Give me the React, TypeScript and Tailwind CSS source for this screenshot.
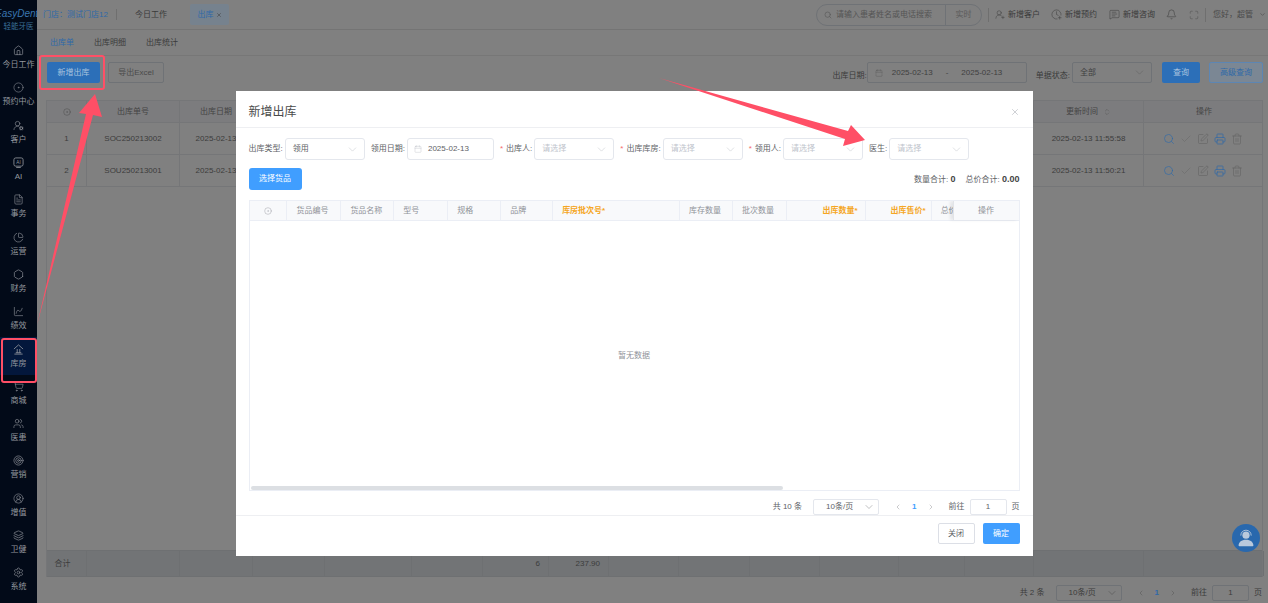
import {
  Bell, Calendar, Check, ChartPie, ChartSpline, ChevronDown, ChevronLeft, ChevronRight, ChevronsUpDown, CircleDot,
  CircleUserRound, ClockPlus, FileText, Home, Layers, Maximize, MessageSquareText, Printer, Search, Settings,
  ShoppingCart, SquarePen, Target, Trash2, UserRoundCog, UserRoundPlus, Users, X, Hexagon,
} from 'lucide-react'
import type { ReactNode } from 'react'

const sans = "font-['Liberation_Sans','Noto_Sans_CJK_SC',sans-serif]"

// 侧边栏里 lucide 没有的两个图标
function AiIcon() {
  return (
    <svg width="11" height="11" viewBox="0 0 12 12" fill="none" stroke="currentColor" strokeWidth="0.9">
      <rect x="1" y="1" width="10" height="9" rx="2" />
      <text x="6" y="7.6" textAnchor="middle" fontSize="5" fill="currentColor" stroke="none">AI</text>
      <path d="M3.5 11.5h5" />
    </svg>
  )
}

function StoreIcon() {
  return (
    <svg width="11" height="11" viewBox="0 0 12 12" fill="none" stroke="currentColor" strokeWidth="0.9">
      <path d="M1 5.5 6 1l5 4.5M4.6 5.5v4M7.4 5.5v4M1.5 11h9M3 9.5h6" />
    </svg>
  )
}

// 右下角客服头像
function AgentIcon() {
  return (
    <svg width="20" height="20" viewBox="0 0 20 20" fill="currentColor">
      <circle cx="10" cy="7.2" r="3.6" />
      <path d="M2.6 17.5c0-3.6 3-5.8 7.4-5.8s7.4 2.2 7.4 5.8c0 .5-.3.8-.8.8H3.4c-.5 0-.8-.3-.8-.8Z" />
      <path d="M4.8 7.6C4.8 4.4 7 2.2 10 2.2s5.2 2.2 5.2 5.4" fill="none" stroke="currentColor" strokeWidth="0.9" />
    </svg>
  )
}

const navItems: { label: string; icon: ReactNode; active?: boolean }[] = [
  { label: '今日工作', icon: <Home size={11} strokeWidth={1.4} /> },
  { label: '预约中心', icon: <CircleDot size={11} strokeWidth={1.2} /> },
  { label: '客户', icon: <UserRoundCog size={11} strokeWidth={1.3} /> },
  { label: 'AI', icon: <AiIcon /> },
  { label: '事务', icon: <FileText size={11} strokeWidth={1.3} /> },
  { label: '运营', icon: <ChartPie size={11} strokeWidth={1.3} /> },
  { label: '财务', icon: <Hexagon size={11} strokeWidth={1.4} /> },
  { label: '绩效', icon: <ChartSpline size={11} strokeWidth={1.3} /> },
  { label: '库房', icon: <StoreIcon />, active: true },
  { label: '商城', icon: <ShoppingCart size={11} strokeWidth={1.3} /> },
  { label: '医患', icon: <Users size={11} strokeWidth={1.3} /> },
  { label: '营销', icon: <Target size={11} strokeWidth={1.4} /> },
  { label: '增值', icon: <CircleUserRound size={11} strokeWidth={1.3} /> },
  { label: '卫健', icon: <Layers size={11} strokeWidth={1.4} /> },
  { label: '系统', icon: <Settings size={11} strokeWidth={1.3} /> },
]

const pageCols =
  'grid grid-cols-[40px_93px_73px_72px_87px_71px_66px_60px_70px_71px_70px_79px_66px_69px_110px_120px]'

const rows = [
  { no: 1, code: 'SOC250213002', updated: '2025-02-13 11:55:58' },
  { no: 2, code: 'SOU250213001', updated: '2025-02-13 11:50:21' },
]

function Sidebar() {
  return (
    <aside className="flex w-[37px] shrink-0 flex-col overflow-hidden bg-[#020a18] text-[#94989f]">
      <div className="h-[39px] shrink-0 overflow-hidden pt-[7px]">
        <div className="-ml-[5px] whitespace-nowrap text-[10px] italic leading-[13px] text-[#3a76b0]">EasyDent</div>
        <div className="mt-[2px] text-center text-[7.5px] leading-[9px] text-[#3a6f98]">轻能牙医</div>
      </div>
      {navItems.map((item) => (
        <div
          key={item.label}
          className={`flex h-[37.3px] shrink-0 flex-col items-center justify-center gap-[4px] ${item.active ? 'bg-[#03173c]' : ''}`}
        >
          {item.icon}
          <span className="whitespace-nowrap text-[8px] leading-[10px]">{item.label}</span>
        </div>
      ))}
    </aside>
  )
}

function TopBar() {
  return (
    <header className="flex h-[30px] shrink-0 items-center border-b border-[#747474] pl-[6px] pr-[2px] text-[#3a3a3a]">
      <span className="w-[65px] whitespace-nowrap text-[#2f69a8]">门店：测试门店12</span>
      <span className="ml-[8px] h-[11px] w-px bg-[#6f6f6f]" />
      <span className="ml-[18px]">今日工作</span>
      <span className="ml-[23px] flex h-[21px] w-[39px] items-center justify-center gap-[2px] rounded-[2px] bg-[#76828e] text-[#2f69a8]">
        出库 <X size={6} className="text-[#3a3a3a]" />
      </span>
      <div className="ml-auto flex h-[22px] w-[166px] items-center rounded-full border border-[#6f7276] text-[#5a5a5a]">
        <Search size={8} className="ml-[7px]" />
        <span className="ml-[4px] w-[109px] whitespace-nowrap text-[#555]">请输入患者姓名或电话搜索</span>
        <span className="flex h-full flex-1 items-center justify-center border-l border-[#6f7276]">实时</span>
      </div>
      <span className="ml-[6px] h-[14px] w-px bg-[#6f6f6f]" />
      <span className="ml-[6px] flex w-[45px] items-center gap-[3px] whitespace-nowrap">
        <UserRoundPlus size={11} strokeWidth={1.1} />新增客户
      </span>
      <span className="ml-[11px] flex w-[46px] items-center gap-[3px] whitespace-nowrap">
        <ClockPlus size={11} strokeWidth={1.1} />新增预约
      </span>
      <span className="ml-[12px] flex w-[46px] items-center gap-[3px] whitespace-nowrap">
        <MessageSquareText size={11} strokeWidth={1.1} />新增咨询
      </span>
      <Bell size={11} strokeWidth={1.2} className="ml-[11px]" />
      <Maximize size={10} strokeWidth={1.2} className="ml-[12px] text-[#4f4f4f]" />
      <span className="ml-[6px] h-[14px] w-px bg-[#6f6f6f]" />
      <span className="ml-[7px] whitespace-nowrap text-[#4a4a4a]">您好，超管</span>
      <ChevronDown size={7} className="ml-[6px] text-[#4a4a4a]" />
    </header>
  )
}

function SubTabs() {
  return (
    <nav className="flex h-[26px] shrink-0 items-center gap-[20px] border-b border-[#777] pl-[13px] text-[#3a3a3a]">
      <span className="text-[#2f69a8]">出库单</span>
      <span>出库明细</span>
      <span>出库统计</span>
    </nav>
  )
}

function Toolbar() {
  return (
    <div className="flex h-[34px] shrink-0 items-start pl-[10px] pr-[5px] pt-[6px] text-[#3a3a3a]">
      <button className="h-[21px] w-[53px] rounded-[2px] bg-[#2c6fb8] text-[#a9c4df]">新增出库</button>
      <button className="ml-[8px] h-[21px] w-[56px] rounded-[2px] border border-[#6f7276] text-[#4a4a4a]">导出Excel</button>
      <span className="ml-auto self-center whitespace-nowrap">出库日期:</span>
      <div className="flex h-[21px] w-[160px] items-center rounded-[2px] border border-[#6f7276] text-[#3f3f3f]">
        <Calendar size={8} strokeWidth={1.2} className="ml-[7px] text-[#5a5a5a]" />
        <span className="ml-[9px]">2025-02-13</span>
        <span className="ml-[13px]">-</span>
        <span className="ml-[13px]">2025-02-13</span>
      </div>
      <span className="ml-[9px] self-center whitespace-nowrap">单据状态:</span>
      <div className="ml-[2px] flex h-[21px] w-[80px] items-center justify-between rounded-[2px] border border-[#6f7276] pl-[7px] pr-[5px] text-[#3f3f3f]">
        全部 <ChevronDown size={13} strokeWidth={0.8} className="text-[#5a5a5a]" />
      </div>
      <button className="ml-[10px] h-[21px] w-[38px] rounded-[2px] bg-[#2c6fb8] text-[#a9c4df]">查询</button>
      <button className="ml-[9px] h-[21px] w-[54px] rounded-[2px] border border-[#5d86b3] bg-[#7b8794] text-[#2f69a8]">高级查询</button>
    </div>
  )
}

function OrderTable() {
  const headers = ['', '出库单号', '出库日期', '', '', '', '', '', '', '', '', '', '', '']
  return (
    <div className="ml-[9px] mr-[5px] mt-[10px] flex h-[477px] shrink-0 flex-col border-l border-r border-t border-[#757678] text-[#3c3c3c]">
      <div className={`${pageCols} h-[22px] shrink-0 border-b border-[#757678] bg-[#7c7c7e] text-[#444]`}>
        <div className="flex items-center justify-center border-r border-[#757678]">
          <CircleDot size={8} strokeWidth={1.2} />
        </div>
        {headers.slice(1).map((h, i) => (
          <div key={i} className="flex items-center justify-center border-r border-[#757678]">{h}</div>
        ))}
        <div className="flex items-center justify-center gap-[5px] border-r border-[#757678]">
          更新时间 <ChevronsUpDown size={8} strokeWidth={1.4} className="text-[#555]" />
        </div>
        <div className="flex items-center justify-center">操作</div>
      </div>
      {rows.map((row) => (
        <div key={row.no} className={`${pageCols} h-[32px] shrink-0 border-b border-[#757678]`}>
          <div className="flex items-center justify-center border-r border-[#757678]">{row.no}</div>
          <div className="flex items-center justify-center border-r border-[#757678]">{row.code}</div>
          <div className="flex items-center justify-center border-r border-[#757678]">2025-02-13</div>
          <div className="col-span-11" />
          <div className="flex items-center justify-center border-r border-[#757678]">{row.updated}</div>
          <div className="flex items-center justify-center gap-[5px] pr-[2px]">
            <Search size={12} strokeWidth={1.3} className="text-[#2f69a8]" />
            <Check size={12} strokeWidth={1} className="text-[#666]" />
            <SquarePen size={12} strokeWidth={1} className="text-[#5e5e5e]" />
            <Printer size={12} strokeWidth={1.4} className="text-[#2f69a8]" />
            <Trash2 size={12} strokeWidth={1} className="text-[#5e5e5e]" />
          </div>
        </div>
      ))}
      <div className="flex-1" />
      <div className={`${pageCols} h-[27px] shrink-0 border-y border-[#6e7072] bg-[#727476]`}>
        {Array.from({ length: 16 }).map((_, i) => (
          <div
            key={i}
            className={`flex items-center border-r border-[#6e7072] pr-[8px] ${i === 0 ? 'justify-center pr-0' : 'justify-end'}`}
          >
            {i === 0 ? '合计' : i === 6 ? '6' : i === 7 ? '237.90' : ''}
          </div>
        ))}
      </div>
    </div>
  )
}

function Pager({ total, dark }: { total: number; dark?: boolean }) {
  const border = dark ? 'border-[#6f7276]' : 'border-[#e4e7ed]'
  return (
    <div className={`flex items-center justify-end whitespace-nowrap ${dark ? 'text-[#3c3c3c]' : 'text-[#606266]'}`}>
      <span>共 {total} 条</span>
      <div className={`ml-[11px] flex h-[16px] w-[66px] items-center justify-between rounded-[2px] border pl-[12px] pr-[3px] ${border}`}>
        10条/页 <ChevronDown size={12} strokeWidth={0.8} />
      </div>
      <ChevronLeft size={8} strokeWidth={1} className="ml-[15px]" />
      <span className={`ml-[10px] font-bold ${dark ? 'text-[#2f69a8]' : 'text-[#409eff]'}`}>1</span>
      <ChevronRight size={8} strokeWidth={1} className="ml-[10px]" />
      <span className="ml-[14px]">前往</span>
      <div className={`ml-[5px] flex h-[16px] w-[37px] items-center justify-center rounded-[2px] border ${border}`}>1</div>
      <span className="ml-[5px]">页</span>
    </div>
  )
}

function Field({ label, required, children }: { label: string; required?: boolean; children: ReactNode }) {
  return (
    <div className="flex items-center gap-[2px]">
      <span className="whitespace-nowrap text-[#606266]">
        {required && <span className="mr-[3px] text-[#f56c6c]">*</span>}
        {label}:
      </span>
      {children}
    </div>
  )
}

function SelectBox({ value, placeholder }: { value?: string; placeholder?: string }) {
  return (
    <div className="flex h-[22px] w-[80px] items-center justify-between rounded-[3px] border border-[#e4e7ed] pl-[7px] pr-[5px]">
      <span className={value ? 'text-[#606266]' : 'text-[#c0c4cc]'}>{value ?? placeholder}</span>
      <ChevronDown size={13} strokeWidth={0.8} className="text-[#b4b8c0]" />
    </div>
  )
}

function Modal() {
  const cols = [
    { w: 'w-[54px]', t: '货品编号' },
    { w: 'w-[53px]', t: '货品名称' },
    { w: 'w-[54px]', t: '型号' },
    { w: 'w-[53px]', t: '规格' },
    { w: 'w-[52px]', t: '品牌' },
    { w: 'w-[127px]', t: '库房批次号*', hot: true },
    { w: 'w-[53px]', t: '库存数量' },
    { w: 'w-[54px]', t: '批次数量' },
  ]
  return (
    <div className="absolute inset-0 flex justify-center pt-[91px]">
      <div className="flex h-[465px] w-[797px] flex-col bg-white text-[#606266]">
        <div className="flex h-[37px] shrink-0 items-center justify-between border-b border-[#eeeff2] pl-[13px] pr-[13px] pt-[6px]">
          <span className="text-[12px] text-[#4a4a4a]">新增出库</span>
          <X size={10} strokeWidth={1} className="text-[#8a8f98]" />
        </div>
        <div className="mt-[10px] flex items-center gap-[6px] pl-[13px]">
          <Field label="出库类型"><SelectBox value="领用" /></Field>
          <Field label="领用日期">
            <div className="flex h-[22px] w-[87px] items-center rounded-[3px] border border-[#e4e7ed] pl-[6px]">
              <Calendar size={8} strokeWidth={1} className="text-[#b0b4bc]" />
              <span className="ml-[6px]">2025-02-13</span>
            </div>
          </Field>
          <Field label="出库人" required><SelectBox placeholder="请选择" /></Field>
          <Field label="出库库房" required><SelectBox placeholder="请选择" /></Field>
          <Field label="领用人" required><SelectBox placeholder="请选择" /></Field>
          <Field label="医生"><SelectBox placeholder="请选择" /></Field>
        </div>
        <div className="mt-[8px] flex h-[22px] items-center justify-between px-[13px]">
          <button className="h-[22px] w-[53px] rounded-[3px] bg-[#409eff] text-white">选择货品</button>
          <span className="whitespace-nowrap text-[#606266]">
            数量合计: <b className="text-[9px] text-[#444]">0</b>
            <span className="ml-[10px]">总价合计: </span>
            <b className="text-[9px] text-[#444]">0.00</b>
          </span>
        </div>
        <div className="relative mx-[13px] mt-[10px] flex h-[291px] shrink-0 flex-col overflow-hidden border border-[#ebeef5]">
          <div className="flex h-[20px] shrink-0 border-b border-[#ebeef5] bg-[#f8f9fb] text-[#909399]">
            <div className="flex w-[38px] items-center justify-center border-r border-[#ebeef5]">
              <CircleDot size={8} strokeWidth={1.2} />
            </div>
            {cols.map((c) => (
              <div
                key={c.t}
                className={`flex items-center border-r border-[#ebeef5] pl-[9px] ${c.w} ${c.hot ? 'font-semibold text-[#f5a623]' : ''}`}
              >
                {c.t}
              </div>
            ))}
            <div className="flex w-[79px] items-center justify-end border-r border-[#ebeef5] pr-[7px] font-semibold text-[#f5a623]">出库数量*</div>
            <div className="flex w-[66px] items-center justify-end border-r border-[#ebeef5] pr-[5px] font-semibold text-[#f5a623]">出库售价*</div>
            <div className="w-[21px] overflow-hidden whitespace-nowrap pl-[9px] leading-[20px]">总价合计</div>
            <div className="flex w-[66px] items-center justify-center border-l border-[#e2e4e8] bg-[#f8f9fb] shadow-[-3px_0_3px_rgba(0,0,0,0.08)]">操作</div>
          </div>
          <div className="flex flex-1 items-center justify-center pt-[5px] text-[#909399]">暂无数据</div>
          <div className="ml-[1px] h-[4px] w-[532px] shrink-0 rounded-full bg-[#dcdfe3]" />
        </div>
        <div className="mx-[13px] mt-[8px]"><Pager total={10} /></div>
        <div className="flex flex-1 items-start justify-end gap-[8px] border-t border-[#eeeff2] pr-[13px] pt-[7px]">
          <button className="h-[21px] w-[37px] rounded-[2px] border border-[#dcdfe6] text-[#606266]">关闭</button>
          <button className="h-[21px] w-[37px] rounded-[2px] bg-[#409eff] text-white">确定</button>
        </div>
      </div>
    </div>
  )
}

// 截图上后加的红色标注
function Annotations() {
  return (
    <>
      <div className="absolute left-[39px] top-[55px] h-[35px] w-[66px] rounded-[3px] border-[2.5px] border-[#ff4f66]" />
      <div className="absolute left-[1px] top-[338px] h-[45px] w-[36px] rounded-[3px] border-[2.5px] border-[#ff4f66]" />
      <svg className="pointer-events-none absolute inset-0" width="1268" height="603" fill="#ff4f66">
        <polygon points="37,325 86,114 79,113 95,94 102,117 93,115" />
        <polygon points="659,78 848,131 851,125 865,140 843,146 845,139" />
      </svg>
    </>
  )
}

export default function App() {
  return (
    <div className={`relative flex h-[603px] w-[1268px] overflow-hidden bg-[#808080] text-[8px] leading-[10px] ${sans}`}>
      <Sidebar />
      <main className="flex min-w-0 flex-1 flex-col">
        <TopBar />
        <SubTabs />
        <Toolbar />
        <OrderTable />
        <div className="ml-auto mr-[6px] mt-[8px]"><Pager total={2} dark /></div>
      </main>
      <Modal />
      <div className="absolute bottom-[51px] right-[8px] flex h-[28px] w-[28px] items-center justify-center rounded-full bg-[#2968ad] text-[#b9c9dc]">
        <AgentIcon />
      </div>
      <Annotations />
    </div>
  )
}
